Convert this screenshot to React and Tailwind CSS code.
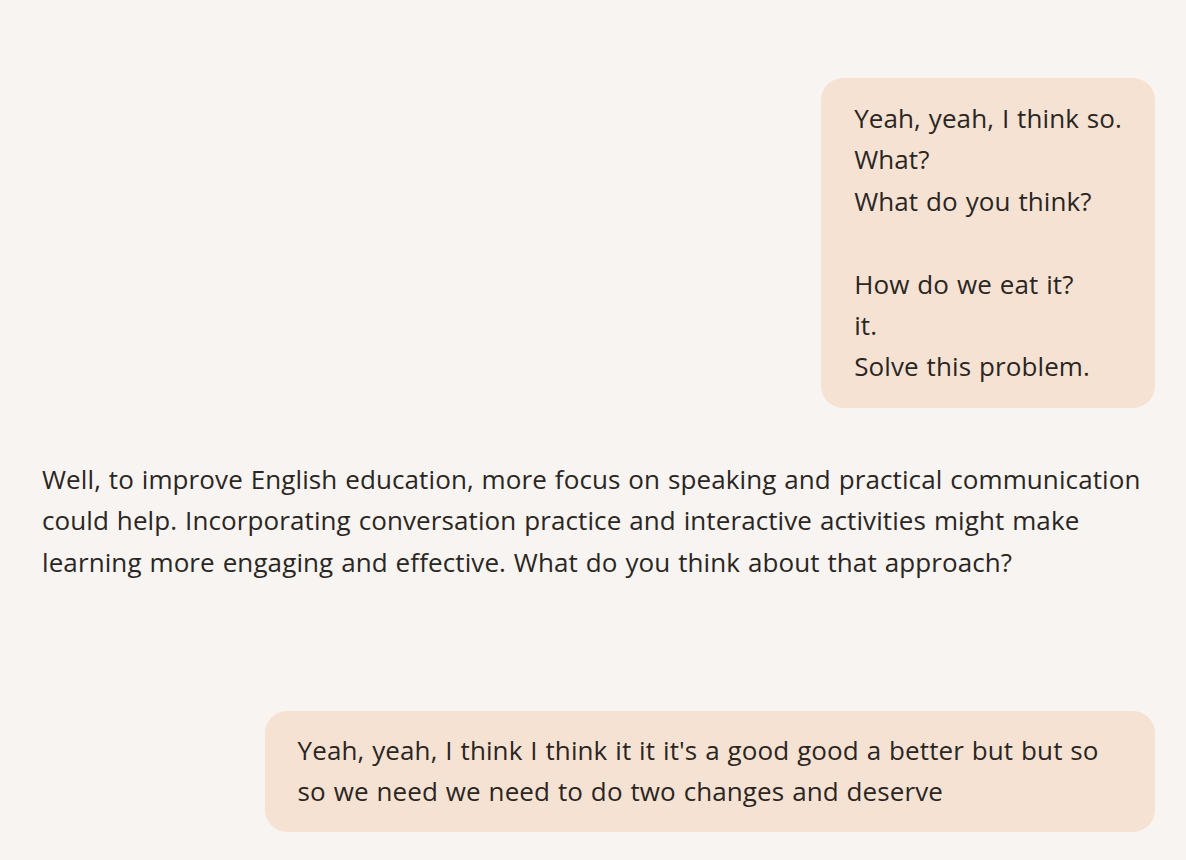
import React from 'react';

const messages = [
    {
        role: 'user',
        lines: ['Yeah, yeah, I think so.', 'What?', 'What do you think?', '', 'How do we eat it?', 'it.', 'Solve this problem.'],
    },
    {
        role: 'assistant',
        text: 'Well, to improve English education, more focus on speaking and practical communication could help. Incorporating conversation practice and interactive activities might make learning more engaging and effective. What do you think about that approach?',
    },
    {
        role: 'user',
        lines: ["Yeah, yeah, I think I think it it it's a good good a better but but so so we need we need to do two changes and deserve"],
    },
];

const App = () => {
    return (
        <div
            className="min-h-[860px] bg-[#f8f4f1] text-[#2a2623] pl-[42px] pr-[31px] pt-[78px] text-[26px] leading-[41.4px] tracking-[0.1px] [word-spacing:1px]"
            style={{ fontFamily: '"Open Sans", "Noto Sans", sans-serif' }}
        >
            <div className="flex justify-end">
                <div className="max-w-[80%] rounded-[22px] bg-[#f6e2d3] px-[33px] py-[20px] whitespace-pre-wrap">
                    {messages[0].lines.map((line, i) => (
                        <div key={i}>{line || '\u00a0'}</div>
                    ))}
                </div>
            </div>

            <p className="mt-[51px]">{messages[1].text}</p>

            <div className="mt-[128px] flex justify-end">
                <div className="max-w-[80%] rounded-[22px] bg-[#f6e2d3] px-[33px] py-[19px]">
                    {messages[2].lines[0]}
                </div>
            </div>
        </div>
    );
};

export default App;
